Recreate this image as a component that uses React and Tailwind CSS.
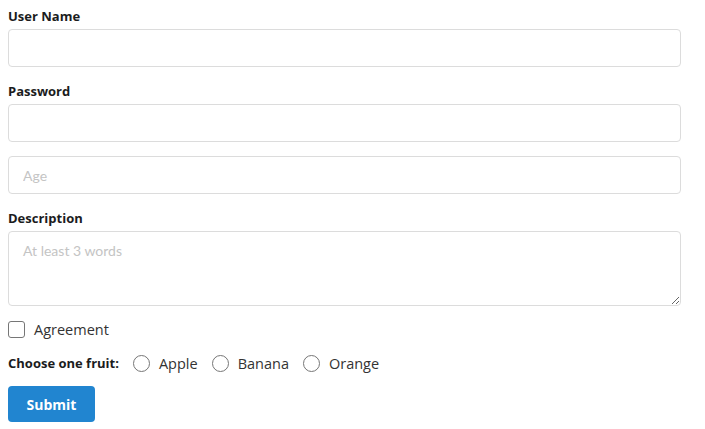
import { useState } from 'react'

const labelFont = { fontFamily: '"Open Sans", "Noto Sans", sans-serif' }

const Field = ({ label, children, className = '' }) => (
  <div className={`flex flex-col ${className}`}>
    {label && (
      <label className="mb-[4px] text-[13px] font-bold leading-[18px] text-[#1b1c1d] font-['Open_Sans',sans-serif]">
        {label}
      </label>
    )}
    {children}
  </div>
)

const inputCls =
  "h-[38px] w-full rounded-[4px] border border-[#dcdcdc] bg-white px-[14px] text-[14px] text-[#333] outline-none placeholder:text-[#c4c4c4] font-['Lato',sans-serif]"

const App = () => {
  const [agree, setAgree] = useState(false)
  const [fruit, setFruit] = useState('')

  return (
    <div className="min-h-[429px] bg-white pl-[8px] pt-[7px]">
      <form className="flex w-[673px] flex-col" onSubmit={(e) => e.preventDefault()}>
        <Field label="User Name" className="mb-[15px]">
          <input type="text" className={inputCls} />
        </Field>
        <Field label="Password" className="mb-[14px]">
          <input type="password" className={inputCls} />
        </Field>
        <Field className="mb-[15px]">
          <input type="text" placeholder="Age" className={inputCls} />
        </Field>
        <Field label="Description" className="mb-[15px]">
          <textarea
            placeholder="At least 3 words"
            className="h-[75px] w-full resize-y rounded-[4px] border border-[#dcdcdc] bg-white px-[14px] py-[10px] text-[14px] leading-[18px] text-[#333] outline-none placeholder:text-[#c4c4c4] font-['Lato',sans-serif]"
          />
        </Field>

        <label className="flex h-[17px] cursor-pointer items-center gap-[9px]">
          <input
            type="checkbox"
            checked={agree}
            onChange={() => setAgree(!agree)}
            className="m-0 h-[17px] w-[17px] appearance-none rounded-[3px] border border-[#767676] bg-white checked:bg-[#2185d0]"
          />
          <span className="text-[14.5px] text-[#333]" style={labelFont}>Agreement</span>
        </label>

        <div className="mt-[17px] flex h-[17px] items-center">
          <span className="mr-[14px] text-[13px] font-bold text-[#1b1c1d]" style={labelFont}>
            Choose one fruit:
          </span>
          {['Apple', 'Banana', 'Orange'].map((f) => (
            <label key={f} className="mr-[14px] flex cursor-pointer items-center gap-[9px]">
              <input
                type="radio"
                name="fruit"
                checked={fruit === f}
                onChange={() => setFruit(f)}
                className="m-0 h-[17px] w-[17px] appearance-none rounded-full border border-[#767676] bg-white checked:border-[5px] checked:border-[#2185d0]"
              />
              <span className="text-[14.5px] text-[#333]" style={labelFont}>{f}</span>
            </label>
          ))}
        </div>

        <div className="mt-[14px]">
          <button
            type="submit"
            className="h-[36px] w-[87px] rounded-[4px] bg-[#2185d0] text-[14px] font-bold text-white"
            style={labelFont}
          >
            Submit
          </button>
        </div>
      </form>
    </div>
  )
}

export default App
